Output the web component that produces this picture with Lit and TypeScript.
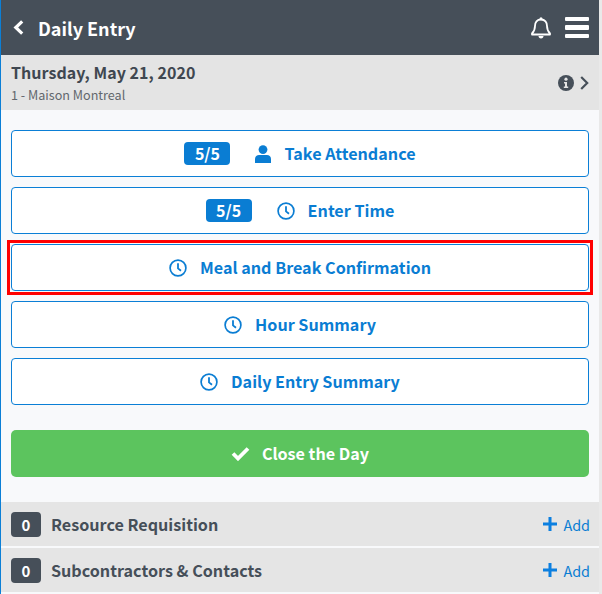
import { LitElement, html, css } from "lit";
import { customElement } from "lit/decorators.js";

const clock = html`<svg class="ic" viewBox="0 0 18 18" width="18" height="18"><circle cx="9" cy="9" r="7.900" fill="none" stroke="currentColor" stroke-width="1.700"/><path d="M9 4.200V9.400L12 11.800" fill="none" stroke="currentColor" stroke-width="1.800"/></svg>`;
const user = html`<svg class="ic" viewBox="0 0 16 18" width="16" height="18"><circle cx="8" cy="4.600" r="4.400" fill="currentColor"/><path d="M0 18V14C0 11.200 2 10 4 10H12C14 10 16 11.200 16 14V18Z" fill="currentColor"/></svg>`;
const plus = html`<svg viewBox="0 0 14 14" width="14" height="14"><path d="M7 0V14M0 7H14" stroke="#0b7fe0" stroke-width="3" fill="none"/></svg>`;

@customElement("app-root")
export class AppRoot extends LitElement {
  static styles = css`
    :host { display: block; width: 602px; height: 594px; overflow: hidden; font-family: "Noto Sans CJK SC", "Noto Sans", sans-serif; background: #f8f9fb; }
    .page { display: flex; flex-direction: column; height: 594px; width: 602px; border-left: 1px solid #0b7fd6; border-right: 3px solid #e9e9e9; box-sizing: border-box; }
    .top { height: 55px; flex: none; background: #464f59; color: #fff; display: flex; align-items: center; padding: 0 10px 0 12px; }
    .top .title { font-size: 18px; font-weight: 700; margin-left: 14px; flex: 1; line-height: 1; }
    .back { display: block; }
    .bell { margin-right: 14px; display: block; }
    .menu { display: flex; flex-direction: column; gap: 4px; width: 24px; }
    .menu i { display: block; height: 4.500px; background: #fff; border-radius: 1px; }
    .sub { height: 55px; flex: none; background: #e4e4e4; display: flex; align-items: center; padding: 0 10px; box-sizing: border-box; }
    .sub .txt { flex: 1; display: flex; flex-direction: column; }
    .date { font-size: 16px; font-weight: 700; color: #3f4750; line-height: 22px; letter-spacing: .05px; }
    .site { font-size: 12.600px; color: #62676d; line-height: 18px; margin-top: 3px; }
    .sub svg { display: block; }
    .sub .i { margin-right: 6px; }
    .main { flex: none; display: flex; flex-direction: column; padding: 20px 10px 25px 10px; gap: 10px; }
    .btn { height: 47px; box-sizing: border-box; border: 1px solid #0b7fd6; border-radius: 4px; background: #fff; color: #0a7dd3; display: flex; align-items: center; justify-content: center; font-size: 16.150px; font-weight: 700; }
    .btn span, .green span { padding-bottom: 2px; }
    .sel { margin: -4px; padding: 1px; border: 3px solid #f00; }
    .btn .badge { background: #0a7dd3; color: #fff; border-radius: 4px; height: 23px; width: 46px; box-sizing: border-box; display: flex; align-items: center; justify-content: center; font-size: 16px; margin-right: 25px; }
    .ic { display: block; margin-right: 13px; }
    .green { height: 47px; border-radius: 5px; background: #5cc45e; color: #fff; display: flex; align-items: center; justify-content: center; font-size: 16.150px; font-weight: 700; margin-top: 15px; }
    .green svg { margin-right: 12px; display: block; }
    .row { height: 44px; flex: none; background: #e5e5e5; margin-bottom: 2px; display: flex; align-items: center; padding: 0 9px 0 10px; color: #464f59; }
    .cnt { width: 30px; height: 25px; border-radius: 4px; background: #464f59; color: #fff; font-weight: 700; font-size: 15px; display: flex; align-items: center; justify-content: center; margin-right: 10px; }
    .name { flex: 1; font-size: 16.150px; font-weight: 700; }
    .add { display: flex; align-items: center; gap: 6px; color: #0a7dd3; font-size: 14.400px; }
    .add svg { display: block; }
  `;

  render() {
    return html`<div class="page">
      <div class="top">
        <svg class="back" viewBox="0 0 11 15" width="11" height="15"><path d="M9.200 1.400L2.800 7.500L9.200 13.600" fill="none" stroke="#fff" stroke-width="3.200"/></svg>
        <span class="title">Daily Entry</span>
        <svg class="bell" viewBox="0 0 20 22" width="20" height="22"><path d="M10 2.500C6 2.500 4 5.500 4 9C4 13 3 14.500 1 16.500V17.500H19V16.500C17 14.500 16 13 16 9C16 5.500 14 2.500 10 2.500Z" fill="none" stroke="#fff" stroke-width="1.800" stroke-linejoin="round"/><circle cx="10" cy="1.800" r="1.500" fill="#fff"/><path d="M7.500 19H12.500C12.500 20.500 11.500 21.500 10 21.500C8.500 21.500 7.500 20.500 7.500 19Z" fill="#fff"/></svg>
        <div class="menu"><i></i><i></i><i></i></div>
      </div>
      <div class="sub">
        <div class="txt"><span class="date">Thursday, May 21, 2020</span><span class="site">1 - Maison Montreal</span></div>
        <svg class="i" viewBox="0 0 16 16" width="16" height="16"><circle cx="8" cy="8" r="8" fill="#464f59"/><circle cx="8" cy="4.200" r="1.600" fill="#e4e4e4"/><path d="M6 7H9V11.500H10.200V13H5.800V11.500H7V8.500H6Z" fill="#e4e4e4"/></svg>
        <svg viewBox="0 0 9 14" width="9" height="14"><path d="M1.200 1L7.200 7L1.200 13" fill="none" stroke="#464f59" stroke-width="2.200"/></svg>
      </div>
      <div class="main">
        <div class="btn"><span class="badge">5/5</span>${user}<span>Take Attendance</span></div>
        <div class="btn"><span class="badge">5/5</span>${clock}<span>Enter Time</span></div>
        <div class="sel"><div class="btn">${clock}<span>Meal and Break Confirmation</span></div></div>
        <div class="btn">${clock}<span>Hour Summary</span></div>
        <div class="btn">${clock}<span>Daily Entry Summary</span></div>
        <div class="green"><svg viewBox="0 0 19 15" width="19" height="15"><path d="M2 7.500L7 12.500L17 2.500" fill="none" stroke="#fff" stroke-width="3.800"/></svg><span>Close the Day</span></div>
      </div>
      <div class="row"><span class="cnt">0</span><span class="name">Resource Requisition</span><span class="add">${plus}Add</span></div>
      <div class="row"><span class="cnt">0</span><span class="name">Subcontractors &amp; Contacts</span><span class="add">${plus}Add</span></div>
    </div>`;
  }
}
